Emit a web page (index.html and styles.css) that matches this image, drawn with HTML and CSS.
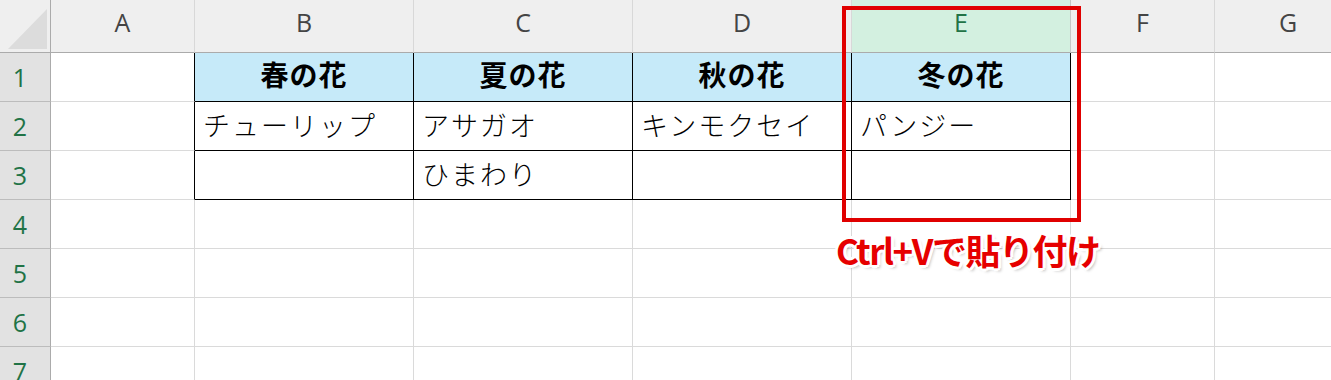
FILE: index.html
```html
<!DOCTYPE html>
<html lang="ja">
<head>
<meta charset="utf-8">
<title>Excel</title>
<link rel="stylesheet" href="styles.css">
</head>
<body>
<div class="sheet">
  <div class="grid">
    <div class="corner"><div class="tri"></div></div>
    <div class="ch">A</div>
    <div class="ch">B</div>
    <div class="ch">C</div>
    <div class="ch">D</div>
    <div class="ch sel">E</div>
    <div class="ch">F</div>
    <div class="ch last">G</div>

    <div class="rh">1</div>
    <div class="c tl"></div>
    <div class="c t th">春の花</div>
    <div class="c t th">夏の花</div>
    <div class="c t th">秋の花</div>
    <div class="c t th">冬の花</div>
    <div class="c"></div>
    <div class="c last"></div>

    <div class="rh">2</div>
    <div class="c tl"></div>
    <div class="c t">チューリップ</div>
    <div class="c t">アサガオ</div>
    <div class="c t">キンモクセイ</div>
    <div class="c t">パンジー</div>
    <div class="c"></div>
    <div class="c last"></div>

    <div class="rh">3</div>
    <div class="c tl"></div>
    <div class="c t tb"></div>
    <div class="c t tb">ひまわり</div>
    <div class="c t tb"></div>
    <div class="c t tb"></div>
    <div class="c"></div>
    <div class="c last"></div>

    <div class="rh">4</div>
    <div class="c"></div><div class="c"></div><div class="c"></div><div class="c"></div><div class="c"></div><div class="c"></div><div class="c last"></div>
    <div class="rh">5</div>
    <div class="c"></div><div class="c"></div><div class="c"></div><div class="c"></div><div class="c"></div><div class="c"></div><div class="c last"></div>
    <div class="rh">6</div>
    <div class="c"></div><div class="c"></div><div class="c"></div><div class="c"></div><div class="c"></div><div class="c"></div><div class="c last"></div>
    <div class="rh">7</div>
    <div class="c"></div><div class="c"></div><div class="c"></div><div class="c"></div><div class="c"></div><div class="c"></div><div class="c last"></div>
  </div>
  <div class="redbox"></div>
  <div class="note">Ctrl+Vで貼り付け</div>
</div>
</body>
</html>
```
FILE: styles.css
```css
html, body {
  margin: 0;
  padding: 0;
  background: #ffffff;
  overflow: hidden;
}
.sheet {
  position: relative;
  width: 1331px;
  height: 380px;
  overflow: hidden;
}
.grid {
  display: grid;
  grid-template-columns: 51px 144px 219px 219px 219px 219px 144px 146px;
  grid-template-rows: 53px repeat(7, 49px);
}
.corner {
  background: #efefef;
  border-right: 1px solid #ababab;
  border-bottom: 1px solid #ababab;
  position: relative;
}
.tri {
  position: absolute;
  left: 8px;
  top: 9px;
  width: 39px;
  height: 40px;
  background: #dcdcdc;
  clip-path: polygon(100% 0, 100% 100%, 0 100%);
}
.ch {
  background: #efefef;
  border-right: 1px solid #d8d8d8;
  border-bottom: 1px solid #ababab;
  display: flex;
  align-items: center;
  justify-content: center;
  font-family: "Open Sans", "Noto Sans", sans-serif;
  font-size: 25px;
  color: #444444;
  padding-bottom: 9px;
  box-sizing: border-box;
}
.ch.sel {
  background: #d3f0e0;
  color: #217346;
  border-right-color: #c6c6c6;
}
.ch.last, .c.last {
  border-right: none;
}
.rh {
  background: #e2e2e2;
  border-right: 1px solid #ababab;
  border-bottom: 1px solid #bcbcbc;
  display: flex;
  align-items: center;
  justify-content: center;
  padding-right: 10px;
  font-family: "Open Sans", "Noto Sans", sans-serif;
  font-size: 25px;
  color: #217346;
}
.c {
  border-right: 1px solid #dadada;
  border-bottom: 1px solid #dadada;
  display: flex;
  align-items: center;
  padding-left: 8px;
  padding-bottom: 4px;
  box-sizing: border-box;
  font-family: "Noto Sans CJK JP", "Noto Sans", sans-serif;
  font-size: 27px;
  font-weight: 300;
  letter-spacing: 2px;
  color: #000000;
  white-space: nowrap;
  overflow: hidden;
}
.c.tl {
  border-right-color: #000000;
}
.c.t {
  border-right-color: #000000;
  border-bottom-color: #000000;
}
.c.tb {
  border-bottom-color: #000000;
}
.c.th {
  background: #c6eaf9;
  font-weight: 700;
  font-size: 28px;
  justify-content: center;
  padding-left: 0;
  padding-bottom: 6px;
  letter-spacing: 1px;
}
.redbox {
  position: absolute;
  left: 842px;
  top: 6px;
  width: 231px;
  height: 208px;
  border: 4px solid #e00000;
}
.note {
  position: absolute;
  left: 836px;
  top: 224px;
  font-family: "Noto Sans CJK JP", "Noto Sans", sans-serif;
  font-weight: 700;
  font-size: 35px;
  letter-spacing: -1.5px;
  color: #e60000;
  white-space: nowrap;
  text-shadow:
    -2px -2px 0 #fff, 2px -2px 0 #fff, -2px 2px 0 #fff, 2px 2px 0 #fff,
    0 -3px 0 #fff, 0 3px 0 #fff, -3px 0 0 #fff, 3px 0 0 #fff,
    3px 3px 3px rgba(0,0,0,0.25);
}
```
